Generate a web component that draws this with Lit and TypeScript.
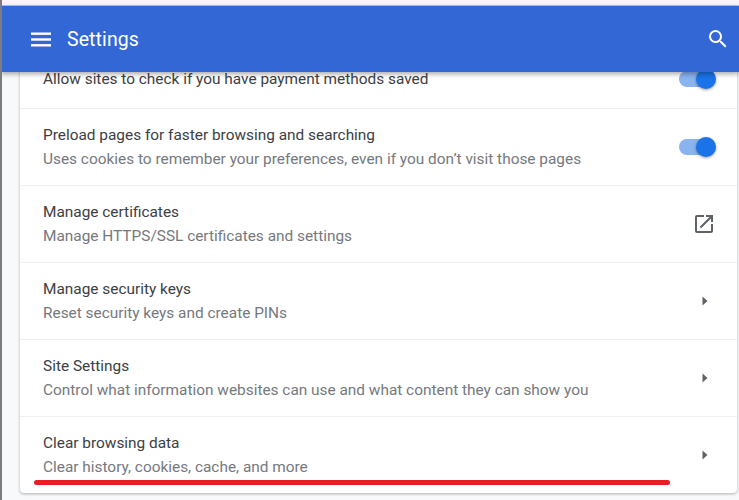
import { LitElement, html, css } from "lit";
import { customElement } from "lit/decorators.js";

type Kind = "toggle" | "ext" | "arrow";
const rows: { t: string; s?: string; k: Kind }[] = [
  { t: "Allow sites to check if you have payment methods saved", k: "toggle" },
  { t: "Preload pages for faster browsing and searching", s: "Uses cookies to remember your preferences, even if you don\u2019t visit those pages", k: "toggle" },
  { t: "Manage certificates", s: "Manage HTTPS/SSL certificates and settings", k: "ext" },
  { t: "Manage security keys", s: "Reset security keys and create PINs", k: "arrow" },
  { t: "Site Settings", s: "Control what information websites can use and what content they can show you", k: "arrow" },
  { t: "Clear browsing data", s: "Clear history, cookies, cache, and more", k: "arrow" },
];

@customElement("app-root")
export class AppRoot extends LitElement {
  static styles = css`
    :host { display: block; width: 739px; height: 500px; overflow: hidden; position: relative; background: #f8f9fa; font-family: Roboto, "Liberation Sans", sans-serif; }
    .frame { display: flex; flex-direction: column; height: 500px; overflow: hidden; border-left: 2px solid #7d7d7d; box-sizing: border-box; }
    .topstrip { height: 5px; flex: none; background: #f6f6f6; border-bottom: 1px solid #c4c4c4; margin-left: -2px; }
    header { flex: none; height: 66px; margin-left: -1px; background: #3367d6; color: #fff; display: flex; align-items: center; padding: 0 9px 0 30px; position: relative; z-index: 2; box-shadow: 0 2px 5px rgba(0,0,0,.35); font-size: 19.5px; letter-spacing: 0.1px; }
    header .burger { width: 20px; height: 15px; margin-right: 16px; flex: none; }
    header .title { flex: 1; }
    header .search { width: 24px; height: 24px; flex: none; }
    main { flex: none; padding: 0 2px 0 18px; }
    .card { background: #fff; margin-top: -22px; border-radius: 4px; box-shadow: 0 1px 3px rgba(60,64,67,.4); }
    .row { height: 77px; box-sizing: border-box; display: flex; align-items: center; padding: 0 23px; border-top: 1px solid #f0f0f0; }
    .row:first-child { border-top: none; height: 58px; }
    .text { flex: 1; display: flex; flex-direction: column; gap: 6px; padding-bottom: 1px; }
    .t { font-size: 15.4px; line-height: 18px; color: #3c4043; }
    .s { font-size: 15.4px; line-height: 18px; color: #75797e; }
    .toggle { width: 36px; height: 16px; border-radius: 8px; background: #8ab4f0; position: relative; flex: none; margin-right: -1px; margin-top: -1px; }
    .toggle::after { content: ""; position: absolute; right: -1px; top: -2px; width: 20px; height: 20px; border-radius: 50%; background: #1a73e8; box-shadow: 0 1px 3px rgba(0,0,0,.4); }
    .icon { flex: none; display: block; }
    .ext { width: 24px; height: 24px; margin-right: -2px; }
    .arrow { width: 20px; height: 20px; margin-right: -1px; }
    .mark { position: absolute; left: 34px; top: 479.5px; width: 636px; height: 5.5px; border-radius: 3px; background: #ea1c24; z-index: 3; }
  `;

  icon(k: Kind) {
    if (k === "toggle") return html`<div class="toggle"></div>`;
    if (k === "ext")
      return html`<svg class="icon ext" viewBox="0 0 24 24" fill="#5f6368"><path d="M19 19H5V5h7V3H5a2 2 0 0 0-2 2v14a2 2 0 0 0 2 2h14c1.1 0 2-.9 2-2v-7h-2v7zM14 3v2h3.59l-9.83 9.83 1.41 1.41L19 6.41V10h2V3h-7z"/></svg>`;
    return html`<svg class="icon arrow" viewBox="0 0 20 20" fill="#5f6368"><path d="M7.5 5.5v9l5-4.5z"/></svg>`;
  }

  render() {
    return html`
      <div class="frame">
        <div class="topstrip"></div>
        <header>
          <svg class="burger" viewBox="0 0 20 15" fill="#fff"><rect y="0.5" width="20" height="2.4"/><rect y="6.3" width="20" height="2.4"/><rect y="12.1" width="20" height="2.4"/></svg>
          <span class="title">Settings</span>
          <svg class="search" viewBox="0 0 24 24" fill="#fff"><path d="M15.5 14h-.79l-.28-.27A6.47 6.47 0 0 0 16 9.5 6.5 6.5 0 1 0 9.5 16c1.61 0 3.09-.59 4.23-1.57l.27.28v.79l5 4.99L20.49 19l-4.99-5zm-6 0C7.01 14 5 11.99 5 9.5S7.01 5 9.5 5 14 7.01 14 9.5 11.99 14 9.5 14z"/></svg>
        </header>
        <main>
          <div class="card">
            ${rows.map((r) => html`<div class="row">
              <div class="text"><div class="t">${r.t}</div>${r.s ? html`<div class="s">${r.s}</div>` : ""}</div>
              ${this.icon(r.k)}
            </div>`)}
          </div>
        </main>
      </div>
      <div class="mark"></div>
    `;
  }
}
